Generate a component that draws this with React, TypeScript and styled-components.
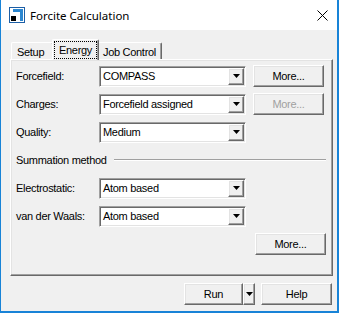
import React from "react";
import styled, { createGlobalStyle, css } from "styled-components";

const GlobalStyle = createGlobalStyle`
  html, body {
    margin: 0;
    padding: 0;
    background: #ffffff;
  }
  body {
    font-family: "Liberation Sans", Arial, sans-serif;
    font-size: 11px;
    letter-spacing: -0.3px;
    color: #000000;
  }
`;

const raised = css`
  border-style: solid;
  border-width: 1px;
  border-color: #ffffff #696969 #696969 #ffffff;
  box-shadow: inset -1px -1px 0 #a0a0a0, inset 1px 1px 0 #e3e3e3;
`;

const sunken = css`
  border-style: solid;
  border-width: 1px;
  border-color: #a0a0a0 #ffffff #ffffff #a0a0a0;
  box-shadow: inset 1px 1px 0 #696969, inset -1px -1px 0 #e3e3e3;
`;

const TitleIcon = () => (
  <svg width="16" height="16" viewBox="0 0 16 16">
    <rect x="0.5" y="0.5" width="15" height="15" fill="#ffffff" stroke="#1d5fa6" />
    <path d="M4 2h10v12h-3V5H4z" fill="#2a86d0" />
    <rect x="2" y="9" width="5" height="5" fill="#000000" />
  </svg>
);

const CloseIcon = () => (
  <svg width="11" height="11" viewBox="0 0 11 11">
    <path d="M0.5 0.5L10.5 10.5M10.5 0.5L0.5 10.5" stroke="#000000" strokeWidth="1" />
  </svg>
);

const Arrow = () => (
  <svg width="7" height="4" viewBox="0 0 7 4">
    <polygon points="0,0 7,0 3.5,4" fill="#000000" />
  </svg>
);

const rows = [
  { label: "Forcefield:", value: "COMPASS", more: true, disabled: false },
  { label: "Charges:", value: "Forcefield assigned", more: true, disabled: true },
  { label: "Quality:", value: "Medium", more: false, disabled: false },
];

const summation = [
  { label: "Electrostatic:", value: "Atom based" },
  { label: "van der Waals:", value: "Atom based" },
];

const Combo = ({ value }: { value: string }) => (
  <ComboBox>
    <ComboValue>{value}</ComboValue>
    <DropButton>
      <Arrow />
    </DropButton>
  </ComboBox>
);

const App = () => {
  return (
    <>
      <GlobalStyle />
      <Window>
        <TitleBar>
          <TitleIcon />
          <Title>Forcite Calculation</Title>
          <Close>
            <CloseIcon />
          </Close>
        </TitleBar>
        <Body>
          <TabStrip>
            <Tab w={43}>Setup</Tab>
            <Tab w={47} active>
              <Focus>Energy</Focus>
            </Tab>
            <Tab w={65}>Job Control</Tab>
          </TabStrip>
          <Panel>
            {rows.map((r) => (
              <Row key={r.label}>
                <Label>{r.label}</Label>
                <Combo value={r.value} />
                {r.more && <Button disabled={r.disabled}>More...</Button>}
              </Row>
            ))}
            <Row>
              <GroupTitle>Summation method</GroupTitle>
              <Etched />
            </Row>
            {summation.map((r) => (
              <Row key={r.label}>
                <Label>{r.label}</Label>
                <Combo value={r.value} />
              </Row>
            ))}
            <Row>
              <Spacer />
              <Button>More...</Button>
            </Row>
          </Panel>
          <Footer>
            <Split>
              <RunButton>Run</RunButton>
              <SplitArrow>
                <Arrow />
              </SplitArrow>
            </Split>
            <Button>Help</Button>
          </Footer>
        </Body>
      </Window>
    </>
  );
};

export default App;

const Window = styled.div`
  width: 339px;
  height: 313px;
  box-sizing: border-box;
  border: solid #1883d7;
  border-width: 0 2px 2px 1px;
  display: flex;
  flex-direction: column;
  background: #f0f0f0;
`;

const TitleBar = styled.div`
  height: 30px;
  flex: none;
  background: #ffffff;
  display: flex;
  align-items: center;
  padding: 0 0 0 8px;
`;

const Title = styled.div`
  margin-left: 5px;
  font-family: "Noto Sans", "Open Sans", sans-serif;
  font-size: 11.5px;
  letter-spacing: 0;
  color: #000000;
`;

const Close = styled.div`
  margin-left: auto;
  margin-right: 9px;
  display: flex;
  align-items: center;
`;

const Body = styled.div`
  flex: 1;
  display: flex;
  flex-direction: column;
  padding: 9px 4px 0 9px;
`;

const TabStrip = styled.div`
  height: 20px;
  display: flex;
  align-items: flex-end;
  padding-left: 1px;
  position: relative;
  z-index: 1;
`;

const Tab = styled.div<{ w: number; active?: boolean }>`
  box-sizing: border-box;
  width: ${(p) => p.w}px;
  height: ${(p) => (p.active ? 21 : 17)}px;
  border-style: solid;
  border-width: 1px 1px 0 1px;
  border-color: #ffffff #696969 #696969 #ffffff;
  border-radius: 2px 2px 0 0;
  box-shadow: inset -1px 0 0 #a0a0a0;
  background: #f0f0f0;
  display: flex;
  align-items: center;
  padding: ${(p) => (p.active ? "0 1px 1px 1px" : "1px 0 0 5px")};
  margin: ${(p) => (p.active ? "0 -2px -1px -2px" : "0")};
  position: relative;
  z-index: ${(p) => (p.active ? 2 : 1)};
  white-space: nowrap;
`;

const Focus = styled.span`
  flex: 1;
  align-self: stretch;
  margin-top: 1px;
  border: 1px dotted #000000;
  display: flex;
  align-items: center;
  padding-left: 4px;
`;

const Panel = styled.div`
  box-sizing: border-box;
  width: 323px;
  height: 217px;
  ${raised};
  padding: 5px 6px 0 5px;
  display: flex;
  flex-direction: column;
  gap: 6px;
`;

const Row = styled.div`
  height: 22px;
  display: flex;
  align-items: center;
`;

const Label = styled.div`
  width: 83px;
  flex: none;
  white-space: nowrap;
`;

const ComboBox = styled.div`
  box-sizing: border-box;
  width: 147px;
  height: 21px;
  ${sunken};
  background: #ffffff;
  display: flex;
  padding: 1px;
  margin-right: 7px;
`;

const ComboValue = styled.div`
  flex: 1;
  display: flex;
  align-items: center;
  padding-left: 2px;
  white-space: nowrap;
  overflow: hidden;
`;

const DropButton = styled.div`
  box-sizing: border-box;
  width: 16px;
  ${raised};
  background: #f0f0f0;
  display: flex;
  align-items: center;
  justify-content: center;
`;

const Button = styled.div<{ disabled?: boolean }>`
  box-sizing: border-box;
  width: 71px;
  height: 22px;
  ${raised};
  background: #f0f0f0;
  display: flex;
  align-items: center;
  justify-content: center;
  color: ${(p) => (p.disabled ? "#a0a0a0" : "#000000")};
`;

const GroupTitle = styled.div`
  white-space: nowrap;
  margin-right: 7px;
`;

const Etched = styled.div`
  flex: 1;
  height: 0;
  border-top: 1px solid #a0a0a0;
  border-bottom: 1px solid #ffffff;
`;

const Spacer = styled.div`
  flex: 1;
`;

const Footer = styled.div`
  display: flex;
  justify-content: flex-end;
  gap: 6px;
  margin-top: 7px;
  padding-right: 1px;
`;

const Split = styled.div`
  display: flex;
`;

const RunButton = styled.div`
  box-sizing: border-box;
  width: 59px;
  height: 22px;
  ${raised};
  background: #f0f0f0;
  display: flex;
  align-items: center;
  justify-content: center;
`;

const SplitArrow = styled.div`
  box-sizing: border-box;
  width: 12px;
  height: 22px;
  ${raised};
  background: #f0f0f0;
  display: flex;
  align-items: center;
  justify-content: center;
`;
